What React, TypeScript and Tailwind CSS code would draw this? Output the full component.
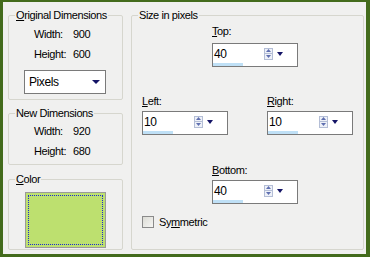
import React from "react"

const font = { fontFamily: '"Liberation Sans", Arial, sans-serif' }

const Spin = ({ value, className }: { value: string; className?: string }) => {
    return (
        <div className={"w-[86px] h-[24px] border border-[#7a7a7a] bg-white flex flex-col " + (className || "")}>
            <div className="flex items-center h-[19px]">
                <span className="ml-[1px] text-[12px] leading-none text-black flex-1 tracking-[-0.3px]">{value}</span>
                <div className="flex flex-col w-[9px] mr-[4px]">
                    <div className="h-[6px] border border-[#b4bed6] bg-[#eef1f8] flex items-center justify-center">
                        <svg width="5" height="3" viewBox="0 0 5 3"><path d="M0 3 L2.5 0 L5 3 Z" fill="#5f6fb0" /></svg>
                    </div>
                    <div className="h-[6px] border border-[#b4bed6] border-t-0 bg-[#eef1f8] flex items-center justify-center">
                        <svg width="5" height="3" viewBox="0 0 5 3"><path d="M0 0 L2.5 3 L5 0 Z" fill="#5f6fb0" /></svg>
                    </div>
                </div>
                <svg width="6" height="4" viewBox="0 0 6 4" className="mr-[14px]"><path d="M0 0 L6 0 L3 4 Z" fill="#141466" /></svg>
            </div>
            <div className="w-[30px] h-[3px] bg-[#bfe0f6]"></div>
        </div>
    )
}

const Row = ({ label, value }: { label: string; value: string }) => (
    <div className="flex items-center h-[20px] text-black">
        <span className="w-[39px] ml-[19px]">{label}</span>
        <span>{value}</span>
    </div>
)

export default function App() {
    return (
        <div style={font} className="w-[370px] h-[257px] bg-[#436b1c] pl-[3px] pt-[2px] pr-[4px] pb-[3px]">
            <div className="w-full h-full bg-[#f0f0ef] flex pl-[5px] pt-[6px] gap-[8px] text-[11px] leading-[14px] tracking-[-0.4px] text-black">
                <div className="flex flex-col w-[115px]">
                    <fieldset className="h-[92px] border border-[#d6d6ce] rounded-[2px] px-[6px]">
                        <legend className="px-[1px] whitespace-nowrap"><span className="underline">O</span>riginal Dimensions</legend>
                        <div className="mt-[2px]">
                            <Row label="Width:" value="900" />
                            <Row label="Height:" value="600" />
                        </div>
                        <div className="mt-[6px] ml-[9px] w-[82px] h-[24px] border border-[#7a7a7a] bg-white flex items-center justify-between pl-[4px] pr-[5px] text-[12px]">
                            <span>Pixels</span>
                            <svg width="8" height="4" viewBox="0 0 8 4"><path d="M0 0 L8 0 L4 4 Z" fill="#141466" /></svg>
                        </div>
                    </fieldset>
                    <fieldset className="mt-[6px] h-[59px] border border-[#d6d6ce] rounded-[2px] px-[6px]">
                        <legend className="px-[1px] whitespace-nowrap">New Dimensions</legend>
                        <div className="mt-[1px]">
                            <Row label="Width:" value="920" />
                            <Row label="Height:" value="680" />
                        </div>
                    </fieldset>
                    <fieldset className="mt-[7px] h-[78px] border border-[#d6d6ce] rounded-[2px] px-[6px]">
                        <legend className="px-[1px] whitespace-nowrap"><span className="underline">C</span>olor</legend>
                        <div className="mt-[6px] ml-[10px] w-[81px] h-[56px] border border-[#9a9a9a] bg-[#bde06f] p-[2px]">
                            <div className="w-full h-full border border-dotted border-[#1c2ad0]"></div>
                        </div>
                    </fieldset>
                </div>
                <fieldset className="w-[233px] h-[242px] border border-[#d6d6ce] rounded-[2px] px-[10px]">
                    <legend className="px-[1px] whitespace-nowrap -ml-[4px]">Size in pixels</legend>
                    <div className="flex flex-col items-start ml-[70px] mt-[2px]">
                        <span><span className="underline">T</span>op:</span>
                        <Spin value="40" className="mt-[5px]" />
                    </div>
                    <div className="flex justify-between mt-[27px]">
                        <div className="flex flex-col">
                            <span><span className="underline">L</span>eft:</span>
                            <Spin value="10" className="mt-[3px]" />
                        </div>
                        <div className="flex flex-col">
                            <span><span className="underline">R</span>ight:</span>
                            <Spin value="10" className="mt-[3px]" />
                        </div>
                    </div>
                    <div className="flex flex-col items-start ml-[70px] mt-[28px]">
                        <span><span className="underline">B</span>ottom:</span>
                        <Spin value="40" className="mt-[3px]" />
                    </div>
                    <div className="flex items-center mt-[11px] gap-[5px]">
                        <div className="w-[12px] h-[12px] border border-[#8a8a8a] bg-gradient-to-br from-[#dcdcd6] to-[#f6f6f4]"></div>
                        <span>Sy<span className="underline">m</span>metric</span>
                    </div>
                </fieldset>
            </div>
        </div>
    )
}
